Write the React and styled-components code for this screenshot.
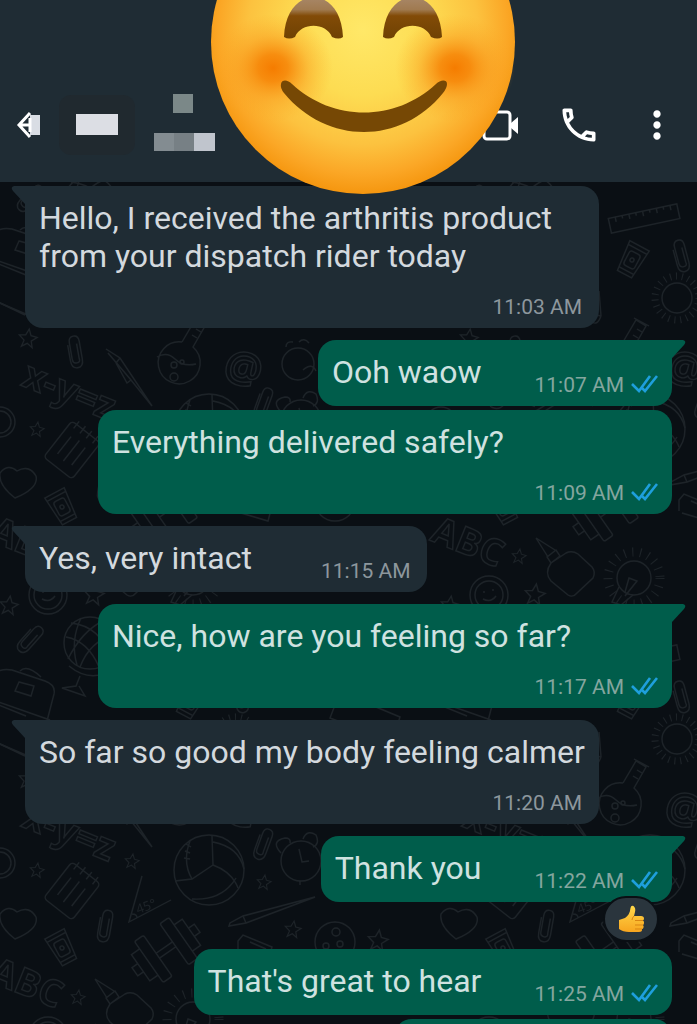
import React from "react";
import styled, { createGlobalStyle } from "styled-components";
import { MdMoreVert, MdOutlineCall } from "react-icons/md";

const messages = [
  {
    id: 1,
    text: "Hello, I received the arthritis product from your dispatch rider today",
    time: "11:03 AM",
    tail: true,
    stacked: true,
  },
  { id: 2, text: "Ooh waow", time: "11:07 AM", mine: true, tail: true },
  {
    id: 3,
    text: "Everything delivered safely?",
    time: "11:09 AM",
    mine: true,
    stacked: true,
  },
  { id: 4, text: "Yes, very intact", time: "11:15 AM", tail: true },
  {
    id: 5,
    text: "Nice, how are you feeling so far?",
    time: "11:17 AM",
    mine: true,
    tail: true,
    stacked: true,
  },
  {
    id: 6,
    text: "So far so good my body feeling calmer",
    time: "11:20 AM",
    tail: true,
    stacked: true,
  },
  {
    id: 7,
    text: "Thank you",
    time: "11:22 AM",
    mine: true,
    tail: true,
    reaction: true,
  },
  { id: 8, text: "That's great to hear", time: "11:25 AM", mine: true },
];

function BackIcon() {
  return (
    <svg width="25" height="28" viewBox="0 0 25 28" aria-hidden="true">
      <path d="M14 4H24V24H14Z" fill="#d9dde4" />
      <path d="M13 6V22L4 14Z" fill="#1f2c34" />
      <path
        d="M14 2L3 14L14 26M3 14H14M14 7V21"
        fill="none"
        stroke="#fff"
        strokeWidth="3"
      />
    </svg>
  );
}

function VideoIcon() {
  return (
    <svg width="44" height="44" viewBox="0 0 44 44" aria-hidden="true">
      <rect
        x="5"
        y="9"
        width="26"
        height="27"
        rx="3"
        fill="none"
        stroke="#fff"
        strokeWidth="3"
      />
      <path d="M32 20L39 14V31L32 25Z" fill="#fff" />
    </svg>
  );
}

function Ticks() {
  return (
    <svg
      width="27"
      height="20"
      viewBox="0 0 27 20"
      fill="none"
      stroke="#1e9fdc"
      strokeWidth="2.6"
      role="img"
      aria-label="Read"
    >
      <path d="M1 9L8 16L19 1" />
      <path d="M11 13L14 16L26 1" />
    </svg>
  );
}

function SmileyFace() {
  return (
    <svg width="100%" viewBox="0 0 304 304" role="img" aria-label="Smiling face">
      <defs>
        <radialGradient id="skin" cx="50%" cy="46%" r="54%">
          <stop offset="0" stopColor="#ffe868" />
          <stop offset="0.400" stopColor="#fddc52" />
          <stop offset="0.700" stopColor="#fcc23f" />
          <stop offset="0.880" stopColor="#fba726" />
          <stop offset="1" stopColor="#f5960f" />
        </radialGradient>
        <radialGradient id="blush">
          <stop offset="0" stopColor="#f57c00" />
          <stop offset="0.250" stopColor="#f68205" stopOpacity="0.850" />
          <stop offset="0.600" stopColor="#f99518" stopOpacity="0.400" />
          <stop offset="1" stopColor="#fba823" stopOpacity="0" />
        </radialGradient>
        <linearGradient id="brow" x1="0" y1="0" x2="0" y2="1">
          <stop offset="0" stopColor="#a88768" />
          <stop offset="0.300" stopColor="#a07a50" />
          <stop offset="0.450" stopColor="#824b07" />
          <stop offset="1" stopColor="#6f4203" />
        </linearGradient>
      </defs>
      <circle cx="152" cy="152" r="152" fill="url(#skin)" />
      <ellipse cx="62" cy="178" rx="60" ry="54" fill="url(#blush)" />
      <ellipse cx="244" cy="178" rx="60" ry="54" fill="url(#blush)" />
      <path
        d="M73 147C75 94 130 94 132 147Q128 150 121 147C115 132 90 132 84 147Q78 150 73 147Z"
        fill="url(#brow)"
      />
      <path
        d="M172 147C174 94 229 94 231 147Q227 150 220 147C214 132 189 132 183 147Q177 150 172 147Z"
        fill="url(#brow)"
      />
      <path
        d="M70 194C71 189 77 190 81 194C122 232 184 232 225 194C229 190 236 189 236 194Q236 198 232 203C190 255 116 255 73 203Q69 198 70 194Z"
        fill="#764805"
      />
    </svg>
  );
}

function ThumbsUp() {
  return (
    <svg width="27" height="28" viewBox="0 0 27 28" aria-hidden="true">
      <defs>
        <linearGradient id="thumb" x1="0" y1="0" x2="0" y2="1">
          <stop offset="0" stopColor="#ffd84a" />
          <stop offset="1" stopColor="#f7a51f" />
        </linearGradient>
      </defs>
      <path
        d="M1 15Q4 14 7 13C10 11 12 8 12.500 3Q13 0 15.500 1Q18 3 17 7L16 11H23Q26 11 26 13.500Q26 15 25 15.500Q26.500 16.500 26 18Q26 19.500 25 20Q26 21 25.500 22.500Q25 24 24 24Q24.500 27 21 27H11Q5 27 1 24Z"
        fill="url(#thumb)"
      />
      <path
        d="M17 15.500H25M17 20H25M17 24H24M16 11Q14 13 14 15"
        fill="none"
        stroke="#d98512"
        strokeWidth="1"
      />
    </svg>
  );
}

const stars = [
  [28, 337, 9],
  [37, 428, 7],
  [132, 419, 7],
  [264, 440, 7],
  [293, 487, 8],
  [78, 555, 7],
  [94, 593, 10],
  [9, 604, 9],
  [378, 498, 10],
];

const clips = [
  [75, 351, -10],
  [263, 402, 20],
  [105, 484, 10],
  [240, 255, -15],
  [30, 638, 42],
];

const starPath = "M0-10L3-3L10-2L4 3L6 10L0 6L-6 10L-4 3L-10-2L-3-3Z";

// one repeat of the wallpaper, 441 x 441
function Doodles() {
  return (
    <g id="doodles">
      {stars.map(([x, y, r]) => (
        <path
          key={`${x}-${y}`}
          d={starPath}
          transform={`translate(${x} ${y}) rotate(8) scale(${r / 10})`}
        />
      ))}
      {clips.map(([x, y, angle]) => (
        <path
          key={`${x}-${y}`}
          d="M-6-8V8Q-6 16 0 16T6 8V-10Q6-16 1-16T-4-10V7Q-4 11 0 11T3 7V-8"
          transform={`translate(${x} ${y}) rotate(${angle})`}
        />
      ))}
      <g fontFamily="Open Sans, sans-serif" fontWeight="700">
        <text x="20" y="384" fontSize="38" transform="rotate(22 20 384)">
          x-y=z
        </text>
        <text x="-12" y="539" fontSize="37" transform="rotate(22 -12 539)">
          ABC
        </text>
        <text x="222" y="378" fontSize="43" transform="rotate(10 222 378)">
          @
        </text>
      </g>
      <text
        x="138"
        y="472"
        fontSize="13"
        fontFamily="Open Sans, sans-serif"
        transform="rotate(-20 138 472)"
        fill="#1d2328"
        stroke="none"
      >
        45°
      </text>
      {/* pen, set square, paint brush */}
      <path d="M106 348L120 357L152 405L131 379L108 352M120 357L116 362M131 379L127 382L116 362" />
      <path d="M142 434L129 480L171 458M132 472Q137 472 137 476" />
      <path d="M315 455L243 474L230 481L229 484L246 481ZM243 474L246 481" />
      {/* notepad */}
      <g transform="translate(72 449) rotate(38)">
        <rect x="-18" y="-23" width="36" height="46" rx="4" />
        <path d="M-9-10V12M0-12V14M9-10V12M-12-27V-18M-4-27V-18M4-27V-18M12-27V-18" />
      </g>
      {/* ball */}
      <circle cx="209" cy="428" r="35" />
      <path d="M212 394L213 423L192 437L175 439M213 423Q232 430 238 446M213 400Q239 405 244 427M192 437Q182 420 190 399M192 457Q222 459 236 436M186 402L191 405M185 409L190 411M184 416L190 417" />
      {/* alarm clock */}
      <circle cx="301" cy="419" r="20" />
      <path d="M299 407L302 420L309 419M281 411Q270 399 285 396Q291 396 290 401M303 397Q307 387 316 393Q320 402 313 405M300 439V443" />
      {/* dumbbell */}
      <g transform="translate(166 508) rotate(-35)">
        <rect x="-21" y="-25" width="11" height="50" rx="2" />
        <rect x="10" y="-25" width="11" height="50" rx="2" />
        <path d="M-10-3H10M-10 3H10M-21-16H-31V16H-21M21-16H31V16H21M-31-5H-38V5H-31M31-5H38V5H31" />
      </g>
      <path d="M15 497Q-2 484 0 472Q8 462 17 470Q29 463 36 475Q39 487 15 497Z" />
      {[
        [62, 506, -28],
        [191, 259, 28],
      ].map(([x, y, angle]) => (
        <g key={x} transform={`translate(${x} ${y}) rotate(${angle})`}>
          <path d="M-11-16H11L8 16H-8ZM-11-12H11M-9 12H9" />
          <rect x="-6" y="-8" width="12" height="16" rx="3" />
          <circle r="2" />
        </g>
      ))}
      {/* glue */}
      <path d="M95 537L107 556M95 537L114 549M106 556L115 549L119 555L110 562ZM110 562Q103 572 110 580L127 594Q132 597 136 592L152 577Q155 571 151 566L137 553Q131 549 125 552Z" />
      {/* bulb */}
      <circle cx="193" cy="577" r="17" />
      <path d="M178 586L171 601L180 604L192 594M184 591L188 577L196 580L184 595" />
      <circle cx="193" cy="577" r="26" strokeWidth="9" strokeDasharray="1 7" />
      {/* sun */}
      <circle cx="236" cy="297" r="15" />
      <circle cx="236" cy="297" r="22" strokeWidth="7" strokeDasharray="1 5" />
      {/* ruler */}
      <g transform="translate(203 217) rotate(-12)">
        <rect x="-35" y="-7" width="70" height="15" />
        <path d="M-28-7V-2M-21-7V-4M-14-7V-2M-7-7V-4M0-7V-2M7-7V-4M14-7V-2M21-7V-4M28-7V-2" />
      </g>
      {/* flask */}
      <path d="M182 341L195 319L205 325L193 346A21 21 0 1 1 182 341M193 317L208 325M157 356Q167 350 175 358T196 363M196 328L201 331M192 334L197 337" />
      <circle cx="174" cy="364" r="3" />
      <circle cx="174" cy="376" r="4" />
      <circle cx="182" cy="361" r="2" />
      {/* apple */}
      <circle cx="298" cy="363" r="16" />
      <path d="M286 346Q286 340 293 341M299 341Q304 336 309 342M303 369Q312 361 316 370" />
      {/* faces and biscuit */}
      <circle cx="48" cy="594" r="19" />
      <circle cx="48" cy="594" r="14" />
      <path d="M43 590V592M52 588V590M42 598Q50 602 55 595" />
      <circle cx="335" cy="500" r="20" />
      <circle cx="336" cy="490" r="4" />
      <circle cx="340" cy="502" r="3" />
      <circle cx="326" cy="504" r="3" />
      <circle cx="0" cy="421" r="15" />
      <circle cx="0" cy="421" r="11" />
      {/* globe */}
      <circle cx="90" cy="642" r="26" />
      <path d="M71 622Q100 625 111 657M66 636Q88 640 99 666M81 617Q70 640 77 664M103 620Q82 630 68 658M114 634Q90 640 80 666M69 665Q92 684 117 666M80 675L76 685L62 687L85 695L79 685" />
      {/* backpack */}
      <path d="M-18 700L-4 672Q2 667 12 669L45 680Q56 684 54 693L47 720M-4 700L50 719M-10 738L25 755M20 670Q27 663 41 676M19 681L34 685L31 695L15 690Z" />
      {/* book, music note, pencil case */}
      <path d="M238 510V499L243 493L272 505L268 520L241 512M250 500L266 507" />
      <path d="M158 290L160 315M160 315Q151 312 150 320Q156 326 160 315" />
      <path d="M-4 262L26 274M-5 300L28 314M340 250L400 275L392 300L330 276Z" />
      <path d="M333 650L372 661L365 690L326 675ZM360 730L390 742L384 760" />
    </g>
  );
}

function Pattern() {
  const shifts = [-441, 0, 441];
  return (
    <Backdrop aria-hidden="true">
      <defs>
        <Doodles />
        <pattern
          id="wallpaper"
          width="441"
          height="441"
          patternUnits="userSpaceOnUse"
          patternTransform="translate(0 -181)"
        >
          {shifts.map((x) =>
            shifts.map((y) => (
              <use key={`${x}${y}`} href="#doodles" x={x} y={y} />
            ))
          )}
        </pattern>
      </defs>
      <rect width="100%" height="100%" fill="url(#wallpaper)" stroke="none" />
    </Backdrop>
  );
}

function Message({ message }) {
  const { text, time, mine, tail, stacked, reaction } = message;
  return (
    <Row $mine={mine} $tail={tail} $reaction={reaction}>
      <Bubble $mine={mine} $tail={tail} $stacked={stacked}>
        <Text $mine={mine}>{text}</Text>
        <Meta $mine={mine}>
          <time>{time}</time>
          {mine && <Ticks />}
        </Meta>
        {reaction && (
          <Reaction type="button" aria-label="Thumbs up reaction">
            <ThumbsUp />
          </Reaction>
        )}
      </Bubble>
    </Row>
  );
}

export default function App() {
  return (
    <Page>
      <GlobalStyle />
      <Header>
        <IconButton type="button" aria-label="Back">
          <BackIcon />
        </IconButton>
        <Avatar>
          <Censor $w={42} $h={21} $color="#dcdee4" />
        </Avatar>
        <Contact>
          <CensorRow $indent={19}>
            <Censor $w={20} $h={19} $color="#7b8888" />
          </CensorRow>
          <CensorRow>
            <Censor $w={20} $h={18} $color="#838c91" />
            <Censor $w={20} $h={18} $color="#778085" />
            <Censor $w={21} $h={18} $color="#c0c5cd" />
          </CensorRow>
        </Contact>
        <Actions>
          <IconButton type="button" aria-label="Video call">
            <VideoIcon />
          </IconButton>
          <IconButton type="button" aria-label="Call">
            <MdOutlineCall size={44} />
          </IconButton>
          <IconButton type="button" aria-label="More options">
            <MdMoreVert size={44} />
          </IconButton>
        </Actions>
        <Sticker>
          <SmileyFace />
        </Sticker>
      </Header>
      <Chat>
        <Pattern />
        <List>
          {messages.map((message) => (
            <Message key={message.id} message={message} />
          ))}
          <Row $mine>
            <NextBubble $mine />
          </Row>
        </List>
      </Chat>
    </Page>
  );
}

const GlobalStyle = createGlobalStyle`
  * {
    box-sizing: border-box;
  }
  body {
    margin: 0;
    background: #0a0f14;
    font-family: Roboto, sans-serif;
  }
`;

const Page = styled.div`
  display: flex;
  flex-direction: column;
  height: 100vh;
  overflow: hidden;
`;

const Header = styled.header`
  position: relative;
  z-index: 1;
  display: flex;
  align-items: center;
  flex-shrink: 0;
  padding: 94px 18px 27px 16px;
  background: #1f2c34;
`;

const IconButton = styled.button`
  display: flex;
  padding: 0;
  border: 0;
  background: none;
  color: #fff;
  cursor: pointer;
`;

const Avatar = styled.div`
  display: flex;
  align-items: center;
  justify-content: center;
  width: 76px;
  height: 60px;
  margin: 0 19px 0 18px;
  border-radius: 12px;
  background: #20292f;
`;

const Contact = styled.div`
  display: flex;
  flex-direction: column;
  gap: 20px;
  padding-bottom: 4px;
`;

const CensorRow = styled.div`
  display: flex;
  padding-left: ${(props) => props.$indent || 0}px;
`;

const Censor = styled.span`
  width: ${(props) => props.$w}px;
  height: ${(props) => props.$h}px;
  background: ${(props) => props.$color};
`;

const Actions = styled.div`
  display: flex;
  gap: 34px;
  margin-left: auto;
`;

const Sticker = styled.div`
  position: absolute;
  bottom: -12px;
  left: calc(50% + 14px);
  width: 304px;
  transform: translateX(-50%);
  svg {
    display: block;
  }
`;

const Chat = styled.main`
  position: relative;
  flex: 1;
  min-height: 0;
  overflow: hidden;
`;

const Backdrop = styled.svg`
  position: absolute;
  inset: 0;
  width: 100%;
  height: 100%;
  fill: none;
  stroke: #1d2328;
  stroke-width: 1.4;
`;

const List = styled.ul`
  position: relative;
  margin: 0;
  padding: 4px 25px;
  list-style: none;
`;

const Row = styled.li`
  display: flex;
  justify-content: ${(props) => (props.$mine ? "flex-end" : "flex-start")};
  margin-top: ${(props) => (props.$tail ? 12 : 4)}px;
  margin-bottom: ${(props) => (props.$reaction ? 47 : 0)}px;
  &:first-child {
    margin-top: 0;
  }
`;

const Bubble = styled.div`
  position: relative;
  display: flex;
  flex-direction: ${(props) => (props.$stacked ? "column" : "row")};
  align-items: ${(props) => (props.$stacked ? "stretch" : "flex-end")};
  column-gap: ${(props) => (props.$mine ? 53 : 69)}px;
  row-gap: 14px;
  width: ${(props) => (props.$stacked ? "calc(100% - 73px)" : "auto")};
  padding: 13px 14px 9px;
  border-radius: 18px;
  border-top-left-radius: ${(props) =>
    props.$tail && !props.$mine ? 0 : 18}px;
  border-top-right-radius: ${(props) => (props.$tail && props.$mine ? 0 : 18)}px;
  background: ${(props) => (props.$mine ? "#005d4b" : "#1f2c34")};
  &::before {
    content: "";
    display: ${(props) => (props.$tail ? "block" : "none")};
    position: absolute;
    top: 0;
    ${(props) => (props.$mine ? "left: 100%;" : "right: 100%;")}
    width: 14px;
    height: 18px;
    background: inherit;
    clip-path: path("M0 0H11Q15 1 12 5L0 18Z");
    transform: ${(props) => (props.$mine ? "none" : "scaleX(-1)")};
  }
`;

const NextBubble = styled(Bubble)`
  width: 43%;
  height: 66px;
`;

const Text = styled.p`
  margin: 0;
  padding-bottom: 6px;
  color: ${(props) => (props.$mine ? "#cfe2e0" : "#d3d9de")};
  font-size: 32px;
  line-height: 38px;
`;

const Meta = styled.div`
  display: flex;
  align-items: center;
  justify-content: flex-end;
  gap: 7px;
  padding-right: ${(props) => (props.$mine ? 0 : 3)}px;
  color: ${(props) => (props.$mine ? "#84a69f" : "#8d979d")};
  font-size: 21px;
  line-height: 24px;
  white-space: nowrap;
`;

const Reaction = styled.button`
  position: absolute;
  top: calc(100% - 6px);
  right: 13px;
  display: flex;
  align-items: center;
  justify-content: center;
  width: 56px;
  height: 46px;
  padding: 0;
  border: 2px solid #0a0f14;
  border-radius: 23px;
  background: #2a353d;
  cursor: pointer;
`;
